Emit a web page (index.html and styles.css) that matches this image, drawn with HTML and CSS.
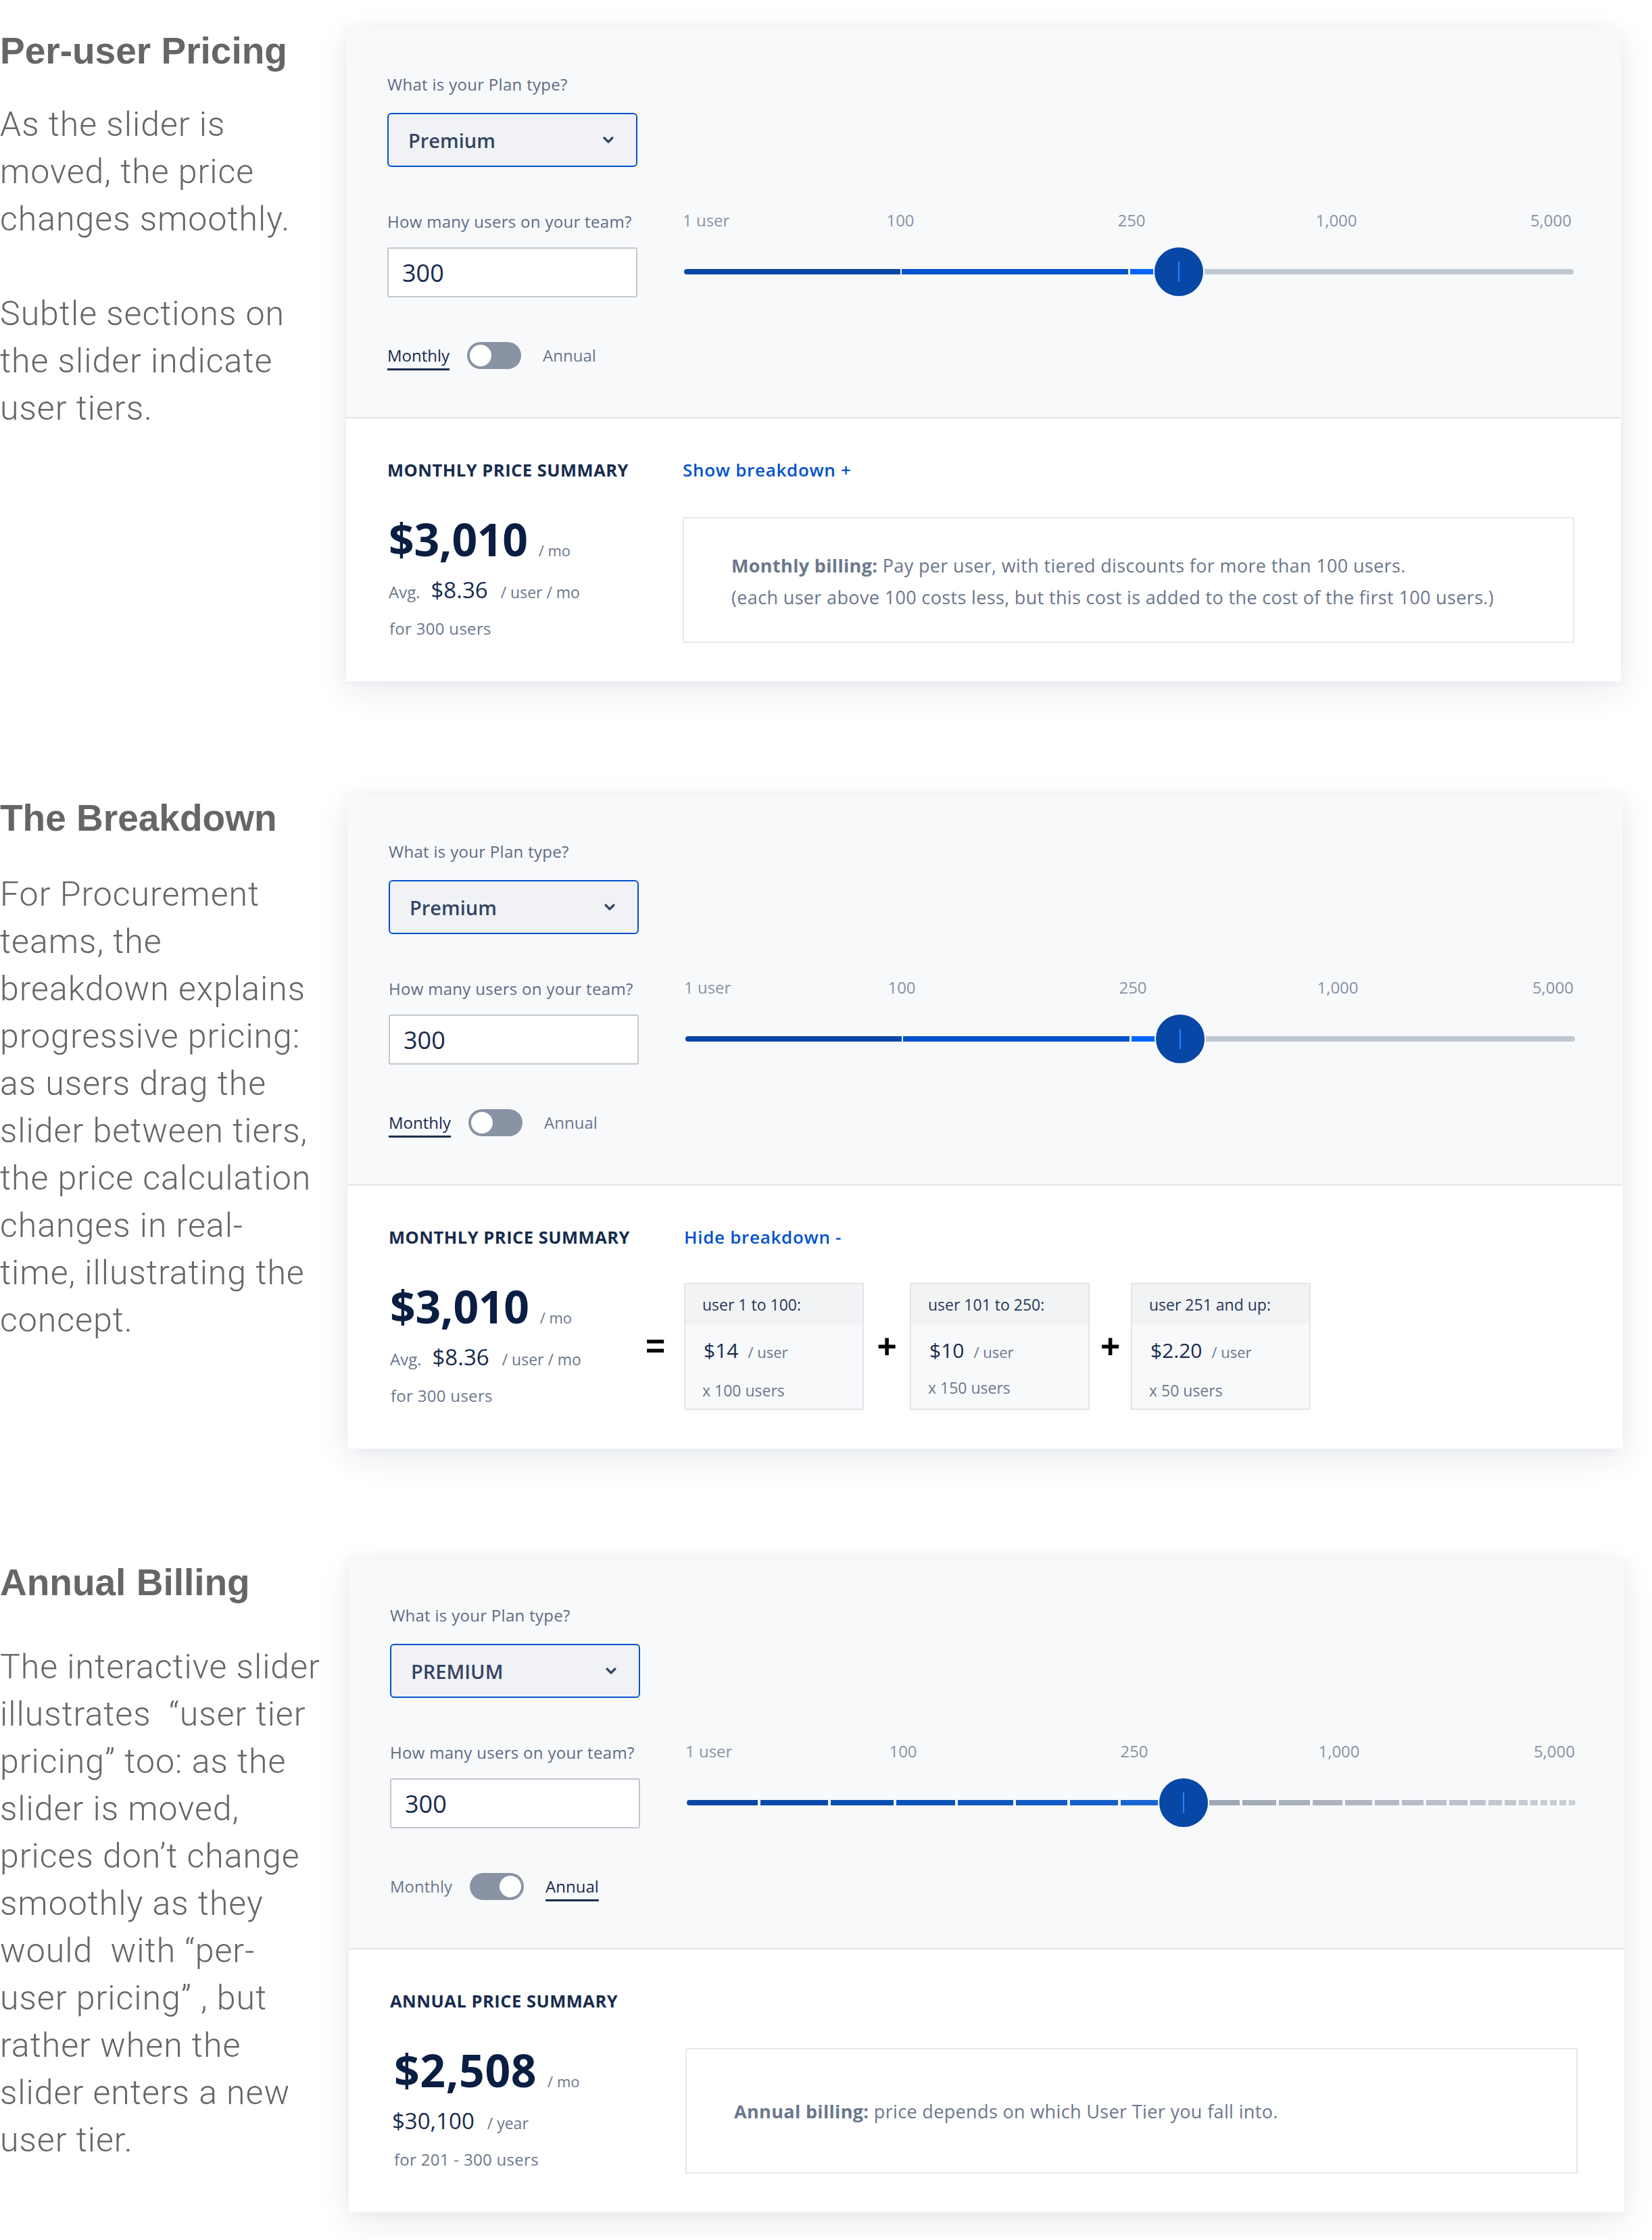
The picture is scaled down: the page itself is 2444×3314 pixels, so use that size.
FILE: index.html
```html
<!DOCTYPE html>
<html lang="en">
<head>
<meta charset="utf-8">
<title>User tier pricing</title>
<link rel="stylesheet" href="styles.css">
</head>
<body>
<main class="page">

  <!-- Section 1 -->
  <section class="row row-1">
    <div class="notes">
      <h2 class="notes-title">Per-user Pricing</h2>
      <p class="notes-text">As the slider is<br>moved, the price<br>changes smoothly.</p>
      <p class="notes-text">Subtle sections on<br>the slider indicate<br>user tiers.</p>
    </div>
    <div class="card">
      <div class="card-top">
        <div class="fields">
          <div class="label">What is your Plan type?</div>
          <div class="select"><span>Premium</span>
            <svg class="chevron" width="18" height="12" viewBox="0 0 18 12"><path d="M3 3l6 6 6-6" fill="none" stroke="#344563" stroke-width="3.2" stroke-linecap="round" stroke-linejoin="round"/></svg>
          </div>
          <div class="label label-users">How many users on your team?</div>
          <div class="input">300</div>
          <div class="toggle-row">
            <span class="toggle-text is-active">Monthly</span>
            <span class="switch"><span class="knob"></span></span>
            <span class="toggle-text">Annual</span>
          </div>
        </div>
        <div class="slider-col">
          <div class="ticks">
            <span class="tick tick-first">1 user</span>
            <span class="tick" style="left:322px">100</span>
            <span class="tick" style="left:664px">250</span>
            <span class="tick" style="left:967px">1,000</span>
            <span class="tick tick-last">5,000</span>
          </div>
          <div class="track">
            <span class="seg seg-dark" style="width:320px"></span>
            <span class="seg seg-mid" style="width:335px;margin-left:2px"></span>
            <span class="seg seg-bright" style="width:36px;margin-left:3px"></span>
            <span class="seg seg-gray" style="width:618px;margin-left:2px"></span>
            <span class="thumb" style="left:694px"></span>
          </div>
        </div>
      </div>
      <div class="card-bottom">
        <div class="summary-title">MONTHLY PRICE SUMMARY</div>
        <div class="breakdown-link">Show breakdown +</div>
        <div class="price-block">
          <div class="price-main"><span class="amount">$3,010</span><span class="per">/ mo</span></div>
          <div class="price-sub"><span class="avg">Avg.</span><span class="sub-amount">$8.36</span><span class="per-sub">/ user / mo</span></div>
          <div class="price-note">for 300 users</div>
        </div>
        <div class="info-box">
          <div><b>Monthly billing:</b> Pay per user, with tiered discounts for more than 100 users.</div>
          <div>(each user above 100 costs less, but this cost is added to the cost of the first 100 users.)</div>
        </div>
      </div>
    </div>
  </section>

  <!-- Section 2 -->
  <section class="row row-2">
    <div class="notes">
      <h2 class="notes-title">The Breakdown</h2>
      <p class="notes-text">For Procurement<br>teams, the<br>breakdown explains<br>progressive pricing:<br>as users drag the<br>slider between tiers,<br>the price calculation<br>changes in real-<br>time, illustrating the<br>concept.</p>
    </div>
    <div class="card">
      <div class="card-top">
        <div class="fields">
          <div class="label">What is your Plan type?</div>
          <div class="select"><span>Premium</span>
            <svg class="chevron" width="18" height="12" viewBox="0 0 18 12"><path d="M3 3l6 6 6-6" fill="none" stroke="#344563" stroke-width="3.2" stroke-linecap="round" stroke-linejoin="round"/></svg>
          </div>
          <div class="label label-users">How many users on your team?</div>
          <div class="input">300</div>
          <div class="toggle-row">
            <span class="toggle-text is-active">Monthly</span>
            <span class="switch"><span class="knob"></span></span>
            <span class="toggle-text">Annual</span>
          </div>
        </div>
        <div class="slider-col">
          <div class="ticks">
            <span class="tick tick-first">1 user</span>
            <span class="tick" style="left:322px">100</span>
            <span class="tick" style="left:664px">250</span>
            <span class="tick" style="left:967px">1,000</span>
            <span class="tick tick-last">5,000</span>
          </div>
          <div class="track">
            <span class="seg seg-dark" style="width:320px"></span>
            <span class="seg seg-mid" style="width:335px;margin-left:2px"></span>
            <span class="seg seg-bright" style="width:36px;margin-left:3px"></span>
            <span class="seg seg-gray" style="width:618px;margin-left:2px"></span>
            <span class="thumb" style="left:694px"></span>
          </div>
        </div>
      </div>
      <div class="card-bottom">
        <div class="summary-title">MONTHLY PRICE SUMMARY</div>
        <div class="breakdown-link">Hide breakdown -</div>
        <div class="price-block">
          <div class="price-main"><span class="amount">$3,010</span><span class="per">/ mo</span></div>
          <div class="price-sub"><span class="avg">Avg.</span><span class="sub-amount">$8.36</span><span class="per-sub">/ user / mo</span></div>
          <div class="price-note">for 300 users</div>
        </div>
        <div class="breakdown">
          <span class="op op-equals">=</span>
          <div class="tier">
            <div class="tier-head">user 1 to 100:</div>
            <div class="tier-price"><span class="tier-amount">$14</span><span class="tier-per">/ user</span></div>
            <div class="tier-count">x 100 users</div>
          </div>
          <span class="op">+</span>
          <div class="tier">
            <div class="tier-head">user 101 to 250:</div>
            <div class="tier-price"><span class="tier-amount">$10</span><span class="tier-per">/ user</span></div>
            <div class="tier-count tier-count-up">x 150 users</div>
          </div>
          <span class="op op-narrow">+</span>
          <div class="tier">
            <div class="tier-head">user 251 and up:</div>
            <div class="tier-price"><span class="tier-amount">$2.20</span><span class="tier-per">/ user</span></div>
            <div class="tier-count">x 50 users</div>
          </div>
        </div>
      </div>
    </div>
  </section>

  <!-- Section 3 -->
  <section class="row row-3">
    <div class="notes">
      <h2 class="notes-title">Annual Billing</h2>
      <p class="notes-text">The interactive slider<br>illustrates &nbsp;“user tier<br>pricing” too: as the<br>slider is moved,<br>prices don’t change<br>smoothly as they<br>would &nbsp;with “per-<br>user pricing” , but<br>rather when the<br>slider enters a new<br>user tier.</p>
    </div>
    <div class="card">
      <div class="card-top">
        <div class="fields">
          <div class="label">What is your Plan type?</div>
          <div class="select"><span>PREMIUM</span>
            <svg class="chevron" width="18" height="12" viewBox="0 0 18 12"><path d="M3 3l6 6 6-6" fill="none" stroke="#344563" stroke-width="3.2" stroke-linecap="round" stroke-linejoin="round"/></svg>
          </div>
          <div class="label label-users">How many users on your team?</div>
          <div class="input">300</div>
          <div class="toggle-row">
            <span class="toggle-text">Monthly</span>
            <span class="switch is-on"><span class="knob"></span></span>
            <span class="toggle-text is-active">Annual</span>
          </div>
        </div>
        <div class="slider-col">
          <div class="ticks">
            <span class="tick tick-first">1 user</span>
            <span class="tick" style="left:322px">100</span>
            <span class="tick" style="left:664px">250</span>
            <span class="tick" style="left:967px">1,000</span>
            <span class="tick tick-last">5,000</span>
          </div>
          <div class="track track-dashed">
            <span class="seg" style="width:105px;background:#0a46a4"></span>
            <span class="seg" style="width:100px;background:#0a4aab"></span>
            <span class="seg" style="width:93px;background:#0b4eb2"></span>
            <span class="seg" style="width:87px;background:#0d52b8"></span>
            <span class="seg" style="width:82px;background:#0f56be"></span>
            <span class="seg" style="width:76px;background:#125bc4"></span>
            <span class="seg" style="width:71px;background:#1560ca"></span>
            <span class="seg" style="width:62px;background:#1966d2"></span>
            <span class="seg" style="width:45px;margin-left:65px;background:#a0a8b5"></span>
            <span class="seg" style="width:50px;background:#a4acb8"></span>
            <span class="seg" style="width:46px;background:#a8b0bb"></span>
            <span class="seg" style="width:44px;background:#acb3be"></span>
            <span class="seg" style="width:40px;background:#b0b7c1"></span>
            <span class="seg" style="width:36px;background:#b3bac4"></span>
            <span class="seg" style="width:32px;background:#b6bdc7"></span>
            <span class="seg" style="width:30px;background:#b9c0c9"></span>
            <span class="seg" style="width:27px;background:#bcc2cb"></span>
            <span class="seg" style="width:23px;background:#bec4cd"></span>
            <span class="seg" style="width:20px;background:#c1c7cf"></span>
            <span class="seg" style="width:17px;background:#c3c8d0"></span>
            <span class="seg" style="width:13px;background:#c5cad2"></span>
            <span class="seg" style="width:11px;background:#c7ccd3"></span>
            <span class="seg" style="width:10px;background:#c8cdd4"></span>
            <span class="seg" style="width:10px;background:#c9ced5"></span>
            <span class="seg" style="width:10px;background:#cacfd6"></span>
            <span class="seg" style="width:10px;background:#cbd0d7"></span>
            <span class="thumb" style="left:697px"></span>
          </div>
        </div>
      </div>
      <div class="card-bottom">
        <div class="summary-title">ANNUAL PRICE SUMMARY</div>
        <div></div>
        <div class="price-block price-block-annual">
          <div class="price-main"><span class="amount">$2,508</span><span class="per">/ mo</span></div>
          <div class="price-sub"><span class="sub-amount sub-amount-year">$30,100</span><span class="per-sub">/ year</span></div>
          <div class="price-note">for 201 - 300 users</div>
        </div>
        <div class="info-box info-box-single">
          <div><b>Annual billing:</b> price depends on which User Tier you fall into.</div>
        </div>
      </div>
    </div>
  </section>

</main>
</body>
</html>
```

FILE: styles.css
```css
* {
  box-sizing: border-box;
}

html,
body {
  margin: 0;
  padding: 0;
  background: #ffffff;
}

.page {
  width: 2444px;
  min-height: 3314px;
  padding-top: 42px;
}

/* ---------- rows ---------- */
.row {
  display: flex;
  align-items: flex-start;
}

.row-2 {
  margin-top: 169px;
}

.row-3 {
  margin-top: 164px;
}

/* ---------- left notes ---------- */
.notes {
  width: 512px;
  flex: none;
}

.notes-title {
  margin: 0 0 41px;
  font-family: "Liberation Sans", Arial, sans-serif;
  font-weight: 700;
  font-size: 55px;
  line-height: 66px;
  color: #666666;
  white-space: nowrap;
}

.row-2 .notes-title {
  margin-bottom: 45px;
}

.row-3 .notes-title {
  margin-top: 1px;
  margin-bottom: 57px;
}

.notes-text {
  margin: 0;
  font-family: Roboto, "Liberation Sans", Arial, sans-serif;
  font-weight: 300;
  font-size: 50px;
  line-height: 70px;
  letter-spacing: 1px;
  color: #666666;
  white-space: nowrap;
}

.notes-text + .notes-text {
  margin-top: 70px;
}

/* ---------- card ---------- */
.card {
  width: 1886px;
  flex: none;
  background: #ffffff;
  box-shadow: 0 14px 46px rgba(9, 30, 66, 0.09), 0 0 20px rgba(9, 30, 66, 0.04);
  font-family: "Open Sans", "Noto Sans", sans-serif;
}

.row-2 .card {
  margin-left: 2px;
  width: 1887px;
}

.row-3 .card {
  margin-left: 4px;
  width: 1887px;
}

.card-top {
  height: 577px;
  display: flex;
  padding: 67px 69px 0 61px;
  background: #f8f9fb;
  border-bottom: 2px solid #e2e5ea;
}

.fields {
  width: 370px;
  flex: none;
}

.label {
  font-size: 24px;
  line-height: 32px;
  letter-spacing: 0.3px;
  color: #5e6c84;
  white-space: nowrap;
}

.select {
  margin-top: 26px;
  height: 80px;
  display: flex;
  align-items: center;
  justify-content: space-between;
  padding: 0 32px 0 29px;
  border: 2px solid #0052cc;
  border-radius: 6px;
  background: #f0f2f6;
  font-size: 29px;
  font-weight: 600;
  color: #344563;
}

.chevron {
  display: block;
}

.label-users {
  margin-top: 65px;
}

.input {
  margin-top: 22px;
  height: 74px;
  display: flex;
  align-items: center;
  padding-left: 20px;
  border: 2px solid #c1c7d0;
  border-radius: 3px;
  background: #ffffff;
  font-size: 36px;
  color: #172b4d;
}

.toggle-row {
  margin-top: 66px;
  height: 40px;
  display: flex;
  align-items: center;
}

.toggle-text {
  font-size: 24px;
  line-height: 32px;
  color: #6b778c;
}

.toggle-text.is-active {
  color: #172b4d;
  text-decoration: underline;
  text-decoration-thickness: 3px;
  text-underline-offset: 10px;
}

.switch {
  width: 80px;
  height: 40px;
  margin: 0 32px 0 26px;
  padding: 4px;
  display: flex;
  border-radius: 20px;
  background: #8993a4;
}

.switch.is-on {
  justify-content: flex-end;
}

.knob {
  width: 32px;
  height: 32px;
  border-radius: 50%;
  background: #ffffff;
}

/* ---------- slider ---------- */
.slider-col {
  flex: 1;
  margin-left: 67px;
  padding-top: 201px;
}

.ticks {
  position: relative;
  height: 32px;
  font-size: 24px;
  line-height: 32px;
  color: #8993a4;
}

.tick {
  position: absolute;
  top: 0;
  transform: translateX(-50%);
  white-space: nowrap;
}

.tick-first {
  left: 0;
  transform: none;
}

.tick-last {
  right: 4px;
  transform: none;
}

.track {
  position: relative;
  width: 1316px;
  height: 8px;
  margin: 56px 0 0 2px;
  display: flex;
}

.track-dashed {
  gap: 4px;
}

.seg {
  flex: none;
  height: 8px;
}

.seg:first-child {
  border-radius: 4px 0 0 4px;
}

.seg:nth-last-child(2) {
  border-radius: 0 4px 4px 0;
}

.seg-dark {
  background: #0747a6;
}

.seg-mid {
  background: #0052cc;
}

.seg-bright {
  background: #0065ff;
}

.seg-gray {
  background: #c1c7d0;
}

.thumb {
  position: absolute;
  top: 50%;
  width: 76px;
  height: 76px;
  margin-top: -38px;
  border: 2px solid #f8f9fb;
  border-radius: 50%;
  background: #0747a6;
}

.thumb::after {
  content: "";
  position: absolute;
  left: 50%;
  top: 50%;
  width: 2px;
  height: 30px;
  margin: -15px 0 0 -1px;
  background: #2684ff;
}

/* ---------- summary ---------- */
.card-bottom {
  height: 389px;
  display: grid;
  grid-template-columns: 370px 1fr;
  grid-template-rows: 34px 186px;
  column-gap: 67px;
  row-gap: 53px;
  align-content: start;
  padding: 59px 69px 0 61px;
}

.summary-title {
  font-size: 25.5px;
  font-weight: 700;
  line-height: 34px;
  letter-spacing: 0.5px;
  color: #172b4d;
  white-space: nowrap;
}

.breakdown-link {
  font-size: 26px;
  font-weight: 600;
  line-height: 34px;
  letter-spacing: 0.7px;
  color: #0052cc;
}

.price-block {
  margin-top: -3px;
}

.price-main {
  height: 70px;
  display: flex;
  align-items: baseline;
  line-height: 70px;
}

.amount {
  padding-left: 2px;
  font-size: 66px;
  font-weight: 700;
  letter-spacing: -0.3px;
  color: #091e42;
}

.per {
  margin-left: 16px;
  font-size: 22px;
  color: #6b778c;
}

.price-sub {
  margin-top: 21px;
  height: 40px;
  display: flex;
  align-items: baseline;
  line-height: 40px;
}

.avg {
  padding-left: 2px;
  font-size: 24px;
  color: #6b778c;
}

.sub-amount {
  margin-left: 16px;
  font-size: 33px;
  color: #172b4d;
}

.sub-amount-year {
  margin-left: 3px;
}

.per-sub {
  margin-left: 19px;
  font-size: 23px;
  color: #6b778c;
}

.price-note {
  margin-top: 22px;
  padding-left: 3px;
  font-size: 24px;
  line-height: 30px;
  letter-spacing: 0.3px;
  color: #6b778c;
}

.price-block-annual .price-main {
  padding-left: 4px;
}

.price-block-annual .amount {
  letter-spacing: 0.6px;
}

.price-block-annual .price-note {
  padding-left: 6px;
}

.info-box {
  padding: 46px 30px 0 70px;
  border: 2px solid #e6e8ee;
  background: #ffffff;
  font-size: 27px;
  line-height: 47px;
  letter-spacing: 0.35px;
  color: #6b778c;
  white-space: nowrap;
}

.info-box b {
  font-weight: 700;
}

.info-box-single {
  display: flex;
  align-items: center;
  padding-top: 0;
}

/* ---------- breakdown tiers ---------- */
.breakdown {
  display: flex;
  align-items: center;
  height: 188px;
  margin-top: -2px;
}

.op {
  width: 68px;
  flex: none;
  text-align: center;
  font-family: "Liberation Sans", Arial, sans-serif;
  font-size: 50px;
  font-weight: 700;
  line-height: 50px;
  color: #000000;
}

.op-narrow {
  width: 61px;
}

.op-equals {
  margin-left: -67px;
  width: 67px;
  padding-right: 18px;
}

.tier {
  width: 266px;
  height: 188px;
  flex: none;
  border: 2px solid #e3e5e9;
  background: #f8f9fb;
}

.tier-head {
  height: 60px;
  padding-left: 25px;
  background: #f2f3f5;
  font-size: 23px;
  line-height: 60px;
  color: #253858;
}

.tier-price {
  margin-top: 18px;
  height: 40px;
  display: flex;
  align-items: baseline;
  padding-left: 27px;
  line-height: 40px;
}

.tier-amount {
  font-size: 30px;
  color: #172b4d;
}

.tier-per {
  margin-left: 14px;
  font-size: 22px;
  color: #6b778c;
}

.tier-count {
  margin-top: 24px;
  padding-left: 25px;
  font-size: 23px;
  line-height: 30px;
  color: #6b778c;
}

.tier-count-up {
  margin-top: 20px;
}
```
